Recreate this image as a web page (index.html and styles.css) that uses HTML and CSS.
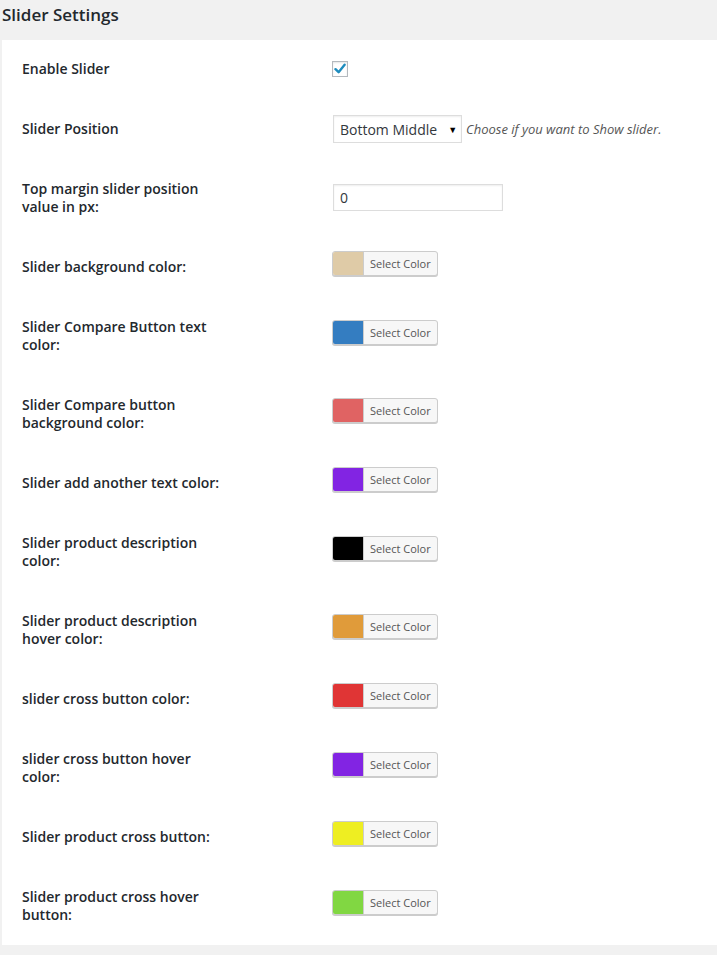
FILE: index.html
```html
<!DOCTYPE html>
<html>
<head>
<meta charset="utf-8">
<link rel="stylesheet" href="styles.css">
</head>
<body>
<h2 class="title">Slider Settings</h2>
<div class="panel">
  <div class="row">
    <div class="label">Enable Slider</div>
    <div class="field"><span class="checkbox"><svg width="12" height="12" viewBox="0 0 12 12"><path d="M1.5 6.2 L4.6 9.2 L10.6 1.8" fill="none" stroke="#1e8cbe" stroke-width="2.4" stroke-linecap="round" stroke-linejoin="round"/></svg></span></div>
  </div>
  <div class="row">
    <div class="label">Slider Position</div>
    <div class="field"><span class="select">Bottom Middle<span class="arrow">▼</span></span><span class="desc">Choose if you want to Show slider.</span></div>
  </div>
  <div class="row">
    <div class="label">Top margin slider position value in px:</div>
    <div class="field"><span class="input">0</span></div>
  </div>
  <div class="row">
    <div class="label">Slider background color:</div>
    <div class="field"><span class="color"><span class="swatch" style="background:#dfcba7"></span><span class="ctext">Select Color</span></span></div>
  </div>
  <div class="row">
    <div class="label">Slider Compare Button text color:</div>
    <div class="field"><span class="color"><span class="swatch" style="background:#347dc1"></span><span class="ctext">Select Color</span></span></div>
  </div>
  <div class="row">
    <div class="label">Slider Compare button background color:</div>
    <div class="field"><span class="color"><span class="swatch" style="background:#e06363"></span><span class="ctext">Select Color</span></span></div>
  </div>
  <div class="row">
    <div class="label">Slider add another text color:</div>
    <div class="field"><span class="color"><span class="swatch" style="background:#8224e3"></span><span class="ctext">Select Color</span></span></div>
  </div>
  <div class="row">
    <div class="label">Slider product description color:</div>
    <div class="field"><span class="color"><span class="swatch" style="background:#000000"></span><span class="ctext">Select Color</span></span></div>
  </div>
  <div class="row">
    <div class="label">Slider product description hover color:</div>
    <div class="field"><span class="color"><span class="swatch" style="background:#e09b3a"></span><span class="ctext">Select Color</span></span></div>
  </div>
  <div class="row">
    <div class="label">slider cross button color:</div>
    <div class="field"><span class="color"><span class="swatch" style="background:#e03535"></span><span class="ctext">Select Color</span></span></div>
  </div>
  <div class="row">
    <div class="label">slider cross button hover color:</div>
    <div class="field"><span class="color"><span class="swatch" style="background:#8224e3"></span><span class="ctext">Select Color</span></span></div>
  </div>
  <div class="row">
    <div class="label">Slider product cross button:</div>
    <div class="field"><span class="color"><span class="swatch" style="background:#eeee22"></span><span class="ctext">Select Color</span></span></div>
  </div>
  <div class="row">
    <div class="label">Slider product cross hover button:</div>
    <div class="field"><span class="color"><span class="swatch" style="background:#81d742"></span><span class="ctext">Select Color</span></span></div>
  </div>
</div>
</body>
</html>
```
FILE: styles.css
```css
html, body {
  margin: 0;
  padding: 0;
  background: #f1f1f1;
  font-family: "Open Sans", "Liberation Sans", sans-serif;
  color: #23282d;
}
.title {
  margin: 0;
  height: 40px;
  padding: 3px 0 0 2px;
  box-sizing: border-box;
  font-size: 17px;
  font-weight: 600;
  line-height: 24px;
  color: #23282d;
}
.panel {
  background: #fff;
  margin-left: 2px;
  height: 905px;
  padding: 0 0 0 20px;
  box-sizing: border-box;
  overflow: hidden;
}
.row {
  display: grid;
  grid-template-columns: 201px 1fr;
  column-gap: 110px;
  align-items: center;
}
.label {
  font-size: 14px;
  font-weight: 600;
  line-height: 18px;
  padding: 20px 0 22px 0;
  align-self: start;
}
.field {
  display: flex;
  align-items: center;
  font-size: 14px;
}
.checkbox {
  width: 14px;
  height: 14px;
  border: 1px solid #b4b9be;
  background: #fff;
  box-shadow: inset 0 1px 2px rgba(0,0,0,0.1);
  display: flex;
  align-items: center;
  justify-content: center;
  margin-left: -1px;
  margin-bottom: 3px;
}
.select {
  display: flex;
  align-items: center;
  height: 26px;
  border: 1px solid #ddd;
  box-shadow: inset 0 1px 2px rgba(0,0,0,0.07);
  box-sizing: content-box;
  padding-left: 6px;
  width: 121px;
  font-size: 14px;
  color: #32373c;
  margin-bottom: 2px;
}
.arrow {
  font-size: 9px;
  margin-left: 11px;
  color: #000;
}
.desc {
  font-size: 13px;
  font-style: italic;
  color: #555;
  margin-left: 4px;
  margin-bottom: 2px;
}
.input {
  width: 162px;
  height: 25px;
  border: 1px solid #ddd;
  box-shadow: inset 0 1px 2px rgba(0,0,0,0.07);
  padding-left: 6px;
  display: flex;
  align-items: center;
  font-size: 14px;
  color: #32373c;
  margin-bottom: 3px;
}
.color {
  display: flex;
  height: 23px;
  border: 1px solid #ccc;
  border-radius: 3px;
  box-shadow: 0 1px 0 #ccc;
  overflow: hidden;
  margin-left: -1px;
  margin-bottom: 9px;
  background: #f7f7f7;
}
.swatch {
  width: 30px;
  height: 100%;
  border-right: 1px solid #ccc;
}
.ctext {
  padding: 0 6px 0 6px;
  font-size: 11px;
  line-height: 23px;
  color: #555;
  width: 61px;
}
```
